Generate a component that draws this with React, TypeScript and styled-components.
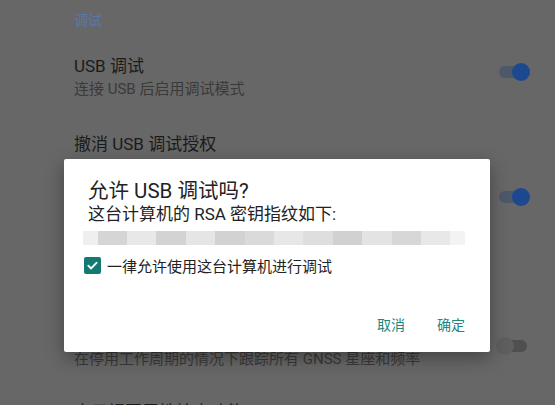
import React from 'react';
import styled, { createGlobalStyle } from 'styled-components';

const GlobalStyle = createGlobalStyle`
  html, body {
    margin: 0;
    padding: 0;
    background: #676767;
  }
  body {
    font-family: Roboto, "Noto Sans CJK SC", sans-serif;
    overflow: hidden;
  }
`;

const Screen = styled.div`
  position: relative;
  width: 555px;
  height: 405px;
  overflow: hidden;
  background: #676767;
`;

const List = styled.div`
  display: flex;
  flex-direction: column;
  padding: 10px 25px 0 74px;
`;

const SectionHeader = styled.div`
  font-size: 14px;
  line-height: 20px;
  color: #5a77a8;
`;

const Row = styled.div<{ $gap: number }>`
  display: flex;
  align-items: flex-start;
  justify-content: space-between;
  margin-top: ${({ $gap }) => $gap}px;
`;

const RowText = styled.div`
  display: flex;
  flex-direction: column;
  gap: 2px;
`;

// rows that sit fully under the dialog keep their height only
const CoveredText = styled.div`
  height: 44px;
`;

const RowTitle = styled.div`
  font-size: 17px;
  line-height: 22px;
  color: #1b1b1b;
`;

const RowSubtitle = styled.div`
  font-size: 15px;
  line-height: 20px;
  color: #3a3a3a;
`;

const Switch = styled.div<{ $top: number }>`
  position: relative;
  flex: 0 0 auto;
  width: 34px;
  height: 18px;
  margin-top: ${({ $top }) => $top}px;
`;

const Track = styled.div<{ $on: boolean }>`
  position: absolute;
  top: 3px;
  left: 3px;
  right: 3px;
  height: 12px;
  border-radius: 6px;
  background: ${({ $on }) => ($on ? '#4d5869' : '#4f4f4f')};
`;

const Thumb = styled.div<{ $on: boolean }>`
  position: absolute;
  top: 0;
  left: ${({ $on }) => ($on ? '16px' : '0')};
  width: 18px;
  height: 18px;
  border-radius: 50%;
  background: ${({ $on }) => ($on ? '#1c4890' : '#5f5f5f')};
`;

const Dialog = styled.div`
  position: absolute;
  left: 64px;
  top: 159px;
  width: 426px;
  height: 193px;
  box-sizing: border-box;
  display: flex;
  flex-direction: column;
  padding: 20px 25px 10px 24px;
  background: #ffffff;
  border-radius: 2px;
  box-shadow: 0 6px 18px rgba(0, 0, 0, 0.35);
`;

const DialogTitle = styled.div`
  font-size: 20.5px;
  line-height: 24px;
  color: #222222;
`;

const DialogMessage = styled.div`
  font-size: 17px;
  line-height: 22px;
  color: #222222;
`;

const Fingerprint = styled.div`
  display: flex;
  margin: 6px 0 0 -5px;
  height: 14px;
`;

const FingerBlock = styled.div<{ $w: number; $c: string }>`
  width: ${({ $w }) => $w}px;
  background: ${({ $c }) => $c};
`;

const CheckRow = styled.label`
  display: flex;
  align-items: center;
  gap: 6px;
  height: 24px;
  margin: 8px 0 0 -4px;
  font-size: 15px;
  color: #222222;
`;

const CheckBox = styled.span`
  display: flex;
  align-items: center;
  justify-content: center;
  width: 17px;
  height: 17px;
  border-radius: 2px;
  background: #137a72;
`;

const Actions = styled.div`
  display: flex;
  justify-content: flex-end;
  gap: 32px;
  margin-top: auto;
`;

const ActionButton = styled.button`
  border: none;
  background: none;
  padding: 0;
  height: 36px;
  font-family: Roboto, "Noto Sans CJK SC", sans-serif;
  font-size: 14px;
  color: #21877e;
  cursor: pointer;
`;

const blocks: [number, string][] = [
  [15, '#efefef'], [30, '#d5d5d5'], [30, '#e8e8e8'], [30, '#d3d3d3'],
  [30, '#e5e5e5'], [30, '#d2d2d2'], [30, '#dadada'], [30, '#e7e7e7'],
  [30, '#dedede'], [30, '#d1d1d1'], [30, '#e3e3e3'], [30, '#d7d7d7'],
  [30, '#e8e8e8'], [15, '#f3f3f3'],
];

const Toggle = ({ on, top }: { on: boolean; top: number }) => (
  <Switch $top={top}>
    <Track $on={on} />
    <Thumb $on={on} />
  </Switch>
);

export default function App() {
  return (
    <Screen>
      <GlobalStyle />
      <List>
        <SectionHeader>调试</SectionHeader>
        <Row $gap={25}>
          <RowText>
            <RowTitle>USB 调试</RowTitle>
            <RowSubtitle>连接 USB 后启用调试模式</RowSubtitle>
          </RowText>
          <Toggle on top={8} />
        </Row>
        <Row $gap={34}>
          <RowTitle>撤消 USB 调试授权</RowTitle>
        </Row>
        <Row $gap={21}>
          <CoveredText />
          <Toggle on top={12} />
        </Row>
        <Row $gap={27}>
          <CoveredText />
        </Row>
        <Row $gap={34}>
          <RowText>
            <CoveredText style={{ height: 22 }} />
            <RowSubtitle>在停用工作周期的情况下跟踪所有 GNSS 星座和频率</RowSubtitle>
          </RowText>
          <Toggle on={false} top={12} />
        </Row>
        <Row $gap={32}>
          <RowTitle>启用视图属性检查功能</RowTitle>
          <Toggle on={false} top={5} />
        </Row>
      </List>

      <Dialog>
        <DialogTitle>允许 USB 调试吗?</DialogTitle>
        <DialogMessage>这台计算机的 RSA 密钥指纹如下:</DialogMessage>
        <Fingerprint>
          {blocks.map(([w, c], i) => (
            <FingerBlock key={i} $w={w} $c={c} />
          ))}
        </Fingerprint>
        <CheckRow>
          <CheckBox>
            <svg width="13" height="13" viewBox="0 0 14 14">
              <path d="M2.5 7.2l3 3L11.5 4" fill="none" stroke="#fff" strokeWidth="2" strokeLinecap="round" strokeLinejoin="round" />
            </svg>
          </CheckBox>
          一律允许使用这台计算机进行调试
        </CheckRow>
        <Actions>
          <ActionButton>取消</ActionButton>
          <ActionButton>确定</ActionButton>
        </Actions>
      </Dialog>
    </Screen>
  );
}
